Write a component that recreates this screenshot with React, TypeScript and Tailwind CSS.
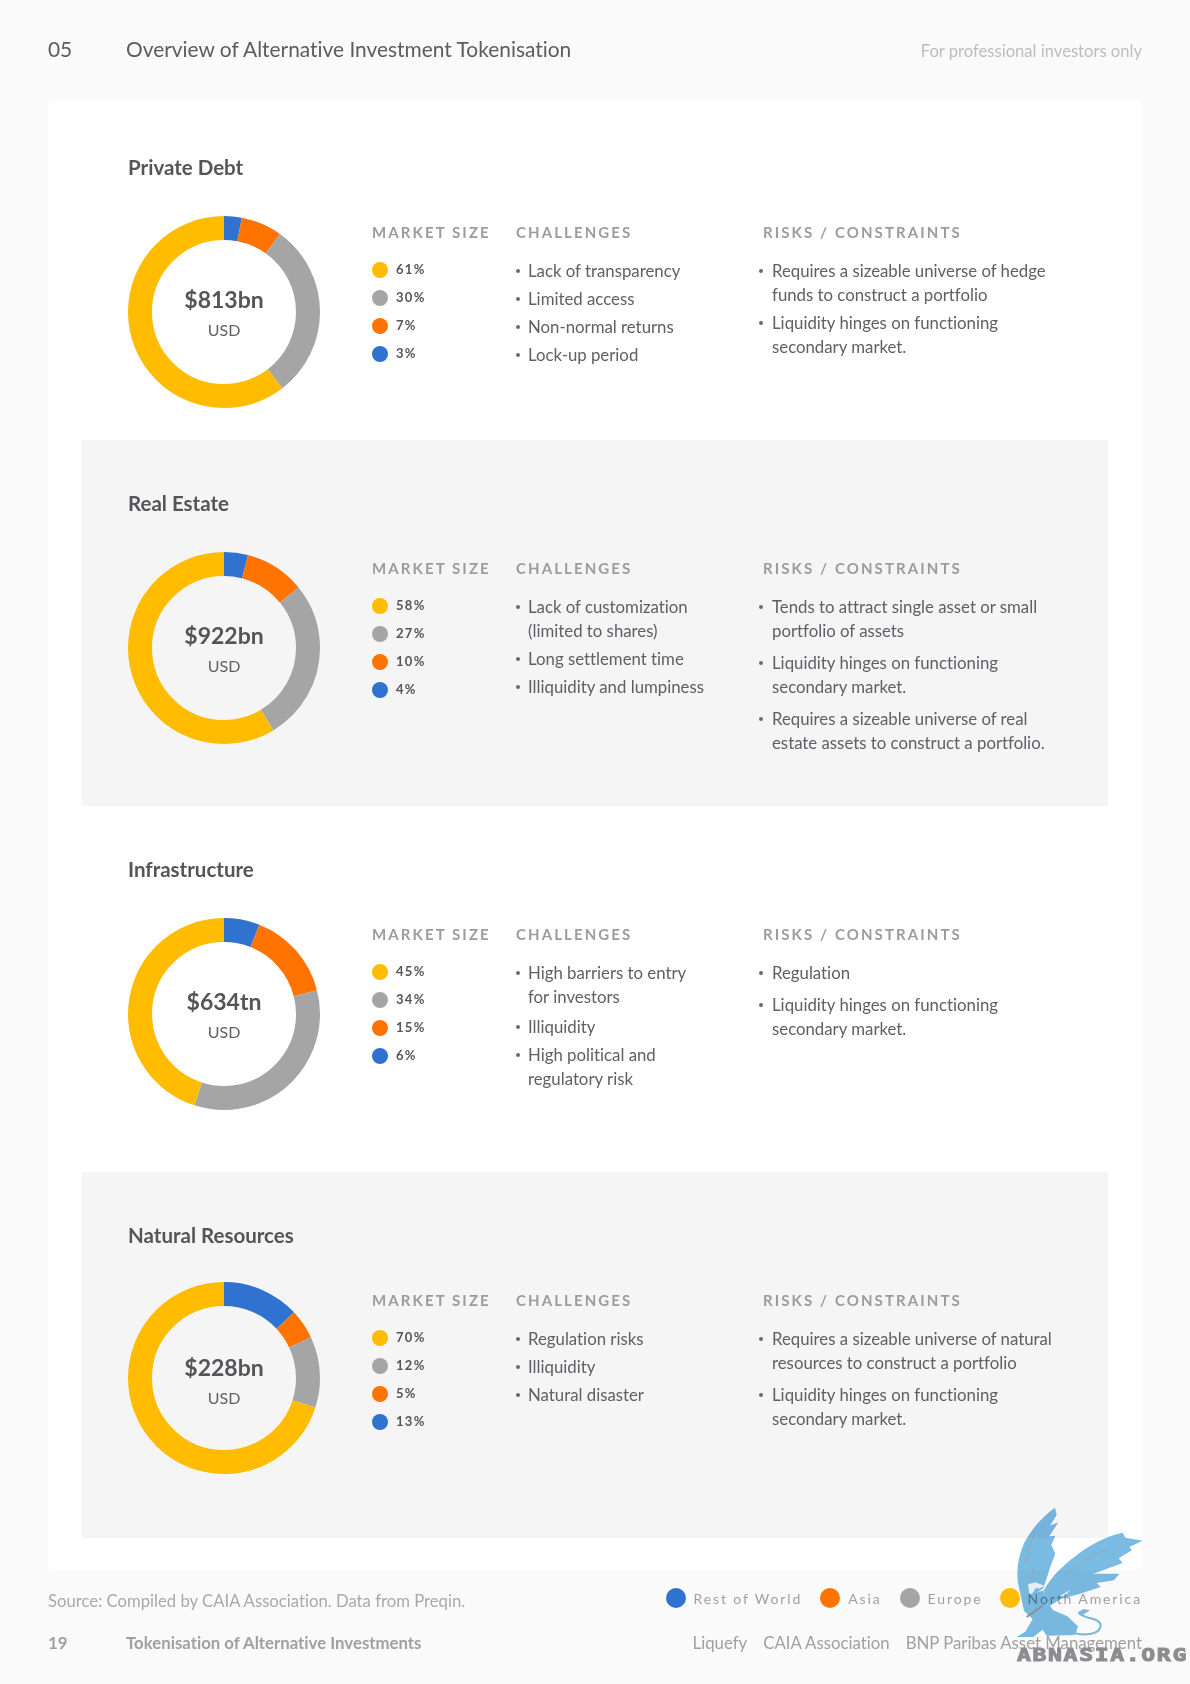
const FONT = "font-['Lato','Noto_Sans',sans-serif]";

const COLORS = ["#2f72cf", "#ff7300", "#a5a5a5", "#ffbc00"];

type Section = {
  title: string;
  amount: string;
  // blue, orange, grey, yellow
  values: number[];
  challenges: string[][];
  risks: string[][];
  shaded?: boolean;
  className: string;
  riskGap: string;
  challengeClass?: string;
  donutClass?: string;
  amountClass?: string;
};

const sections: Section[] = [
  {
    title: "Private Debt",
    amount: "$813bn",
    values: [3, 7, 30, 61],
    challenges: [["Lack of transparency"], ["Limited access"], ["Non-normal returns"], ["Lock-up period"]],
    risks: [
      ["Requires a sizeable universe of hedge", "funds to construct a portfolio"],
      ["Liquidity hinges on functioning", "secondary market."],
    ],
    className: "h-[340px] pt-[52px]",
    riskGap: "gap-1",
  },
  {
    title: "Real Estate",
    amount: "$922bn",
    values: [4, 10, 27, 58],
    challenges: [["Lack of customization", "(limited to shares)"], ["Long settlement time"], ["Illiquidity and lumpiness"]],
    risks: [
      ["Tends to attract single asset or small", "portfolio of assets"],
      ["Liquidity hinges on functioning", "secondary market."],
      ["Requires a sizeable universe of real", "estate assets to construct a portfolio."],
    ],
    shaded: true,
    className: "h-[366px] pt-[48px]",
    riskGap: "gap-2",
  },
  {
    title: "Infrastructure",
    amount: "$634tn",
    values: [6, 15, 34, 45],
    challenges: [["High barriers to entry", "for investors"], ["Illiquidity"], ["High political and", "regulatory risk"]],
    risks: [["Regulation"], ["Liquidity hinges on functioning", "secondary market."]],
    className: "h-[366px] pt-[48px]",
    riskGap: "gap-2",
    challengeClass: "[&>li:first-child]:mb-[2px]",
  },
  {
    title: "Natural Resources",
    amount: "$228bn",
    values: [13, 5, 12, 70],
    challenges: [["Regulation risks"], ["Illiquidity"], ["Natural disaster"]],
    risks: [
      ["Requires a sizeable universe of natural", "resources to construct a portfolio"],
      ["Liquidity hinges on functioning", "secondary market."],
    ],
    shaded: true,
    className: "h-[366px] pt-[48px]",
    riskGap: "gap-2",
    donutClass: "-mt-[2px]",
    amountClass: "pt-[3px]",
  },
];

function Donut({
  values,
  amount,
  className,
  amountClass,
}: {
  values: number[];
  amount: string;
  className?: string;
  amountClass?: string;
}) {
  const total = values.reduce((a, b) => a + b, 0);
  let offset = 0;
  return (
    <div className={`relative h-[192px] w-[192px] shrink-0 ${className ?? ""}`}>
      <svg viewBox="0 0 192 192" className="h-full w-full -rotate-90">
        {values.map((v, i) => {
          const dashOffset = -offset;
          offset += v;
          return (
            <circle
              key={i}
              cx="96"
              cy="96"
              r="84"
              fill="none"
              stroke={COLORS[i]}
              strokeWidth="24"
              pathLength={total}
              strokeDasharray={`${v} ${total - v}`}
              strokeDashoffset={dashOffset}
            />
          );
        })}
      </svg>
      <div className={`absolute inset-0 flex flex-col items-center justify-center ${amountClass ?? ""}`}>
        <span className="mt-[-1px] text-[23px] leading-[32px] font-bold text-[#555558]">{amount}</span>
        <span className="mt-[5px] text-[16px] leading-[20px] text-[#606064]">USD</span>
      </div>
    </div>
  );
}

function Heading({ children }: { children: React.ReactNode }) {
  return <h4 className="text-[15px] leading-[20px] font-bold tracking-[0.14em] text-[#9c9c9f]">{children}</h4>;
}

function Bullets({ items, className }: { items: string[][]; className: string }) {
  return (
    <ul className={`mt-[17px] flex flex-col ${className}`}>
      {items.map((lines, i) => (
        <li key={i} className="relative pl-[12px] text-[16.8px] leading-[24px] whitespace-nowrap text-[#606064]">
          <span className="absolute left-0 top-[10px] h-[4px] w-[4px] rounded-full bg-[#6a6a6e]" />
          {lines.map((line) => (
            <div key={line}>{line}</div>
          ))}
        </li>
      ))}
    </ul>
  );
}

function Row({ section }: { section: Section }) {
  // legend runs yellow, grey, orange, blue
  const legend = [3, 2, 1, 0];
  return (
    <section className={`${section.className} px-[46px] ${section.shaded ? "bg-[#f5f5f6]" : ""}`}>
      <h3 className="text-[20.5px] leading-[30px] font-bold text-[#555558]">{section.title}</h3>
      <div className="mt-[34px] flex">
        <Donut
          values={section.values}
          amount={section.amount}
          className={section.donutClass}
          amountClass={section.amountClass}
        />
        <div className="ml-[52px] w-[144px] pt-[6px]">
          <Heading>MARKET SIZE</Heading>
          <div className="mt-[20px] flex flex-col gap-[12px]">
            {legend.map((idx) => (
              <div key={idx} className="flex h-[16px] items-center gap-[8px]">
                <span className="h-[16px] w-[16px] rounded-full" style={{ backgroundColor: COLORS[idx] }} />
                <span className="text-[13px] font-bold tracking-[0.1em] text-[#555558]">{section.values[idx]}%</span>
              </div>
            ))}
          </div>
        </div>
        <div className="w-[247px] pt-[6px]">
          <Heading>CHALLENGES</Heading>
          <Bullets items={section.challenges} className={`gap-1 ${section.challengeClass ?? ""}`} />
        </div>
        <div className="w-[290px] pt-[6px]">
          <Heading>RISKS / CONSTRAINTS</Heading>
          <div className="ml-[-4px] [&_li]:pl-[13px]">
            <Bullets items={section.risks} className={section.riskGap} />
          </div>
        </div>
      </div>
    </section>
  );
}

function Griffin() {
  return (
    <svg viewBox="0 0 570 540" className="h-[180px] w-[190px]">
      <g fill="#7abbe3">
        {/* left wing */}
        <path d="M165 38 C130 62 95 100 72 145 C55 185 48 225 54 265 L72 348 L100 300 L130 280 L140 250 L152 212 L166 176 L154 150 L166 122 L148 124 L175 82 L150 92 L170 60 Z" />
        {/* right wing */}
        <path d="M428 137 L376 128 L368 113 C320 122 262 152 210 196 C180 222 155 245 132 285 L138 340 L182 312 L240 296 L302 276 L290 264 L342 256 L358 236 L280 236 L368 204 L356 190 L396 166 L388 156 Z" />
        {/* body */}
        <path d="M72 348 L90 300 L130 286 L142 322 L160 346 L202 364 L234 394 L226 420 L140 422 L128 404 L100 426 L50 426 L76 410 L98 372 Z" />
        {/* head */}
        <path d="M84 268 L106 262 L133 272 L118 283 L110 300 L88 312 Z" />
        {/* tuft */}
        <path d="M233 352 L252 342 L270 346 L254 356 L240 362 Z" />
      </g>
      <path d="M210 410 C250 425 300 420 302 392 C302 368 260 374 240 356" fill="none" stroke="#7abbe3" strokeWidth="6" />
      <path d="M84 268 L106 262 L133 272 L118 281 L108 278 L96 296 L88 296 Z" fill="#eaf3f9" />
      <path d="M178 304 L212 284 L194 302 Z" fill="#f5fafc" />
      <g fill="none" stroke="#9ea6ae" strokeWidth="3" strokeLinecap="round">
        <path d="M105 115 C92 140 82 175 76 205" />
        <path d="M320 165 C280 180 230 205 196 240" />
        <path d="M98 222 L97 236" />
      </g>
      <path d="M130 330 L80 366" fill="none" stroke="#93939a" strokeWidth="6" />
    </svg>
  );
}

export default function App() {
  return (
    <div className={`relative h-[1684px] w-[1190px] overflow-hidden bg-[#fafafa] [font-variant-ligatures:none] ${FONT}`}>
      <header className="flex h-[100px] items-start justify-between px-[48px] pt-[35px]">
        <div className="flex text-[20.9px] leading-[28px] text-[#5c5c60]">
          <span className="w-[78px]">05</span>
          <span>Overview of Alternative Investment Tokenisation</span>
        </div>
        <span className="mt-[4px] text-[16.6px] leading-[24px] text-[#bdbdc0]">For professional investors only</span>
      </header>

      <main className="mx-[48px] h-[1470px] rounded-[6px] bg-white px-[34px]">
        {sections.map((s) => (
          <Row key={s.title} section={s} />
        ))}
      </main>

      <footer className="px-[48px]">
        <div className="mt-[18px] flex h-[24px] items-center justify-between">
          <span className="mt-[4px] text-[16.7px] text-[#a9a9ac]">
            Source: Compiled by CAIA Association. Data from Preqin.
          </span>
          <div className="mb-[4px] flex items-center text-[14px] tracking-[0.135em] text-[#a0a0a3]">
            {[
              ["Rest of World", "bg-[#2f72cf]", "mr-[18px]"],
              ["Asia", "bg-[#ff7300]", "mr-[18px]"],
              ["Europe", "bg-[#a5a5a5]", "mr-[17px]"],
              ["North America", "bg-[#ffbc00]", ""],
            ].map(([label, bg, mr]) => (
              <div key={label} className={`flex items-center gap-[8px] ${mr}`}>
                <span className={`h-[20px] w-[20px] rounded-full ${bg}`} />
                <span>{label}</span>
              </div>
            ))}
          </div>
        </div>
        <div className="mt-[19px] flex items-center justify-between text-[16.8px] leading-[24px]">
          <div className="flex font-bold text-[#a0a0a3]">
            <span className="w-[78px]">19</span>
            <span>Tokenisation of Alternative Investments</span>
          </div>
          <div className="flex gap-[16px] text-[#a0a0a3]">
            <span>Liquefy</span>
            <span>CAIA Association</span>
            <span>BNP Paribas Asset Management</span>
          </div>
        </div>
      </footer>

      {/* watermark over the footer */}
      <div className="absolute left-[1000px] top-[1495px] mix-blend-multiply">
        <Griffin />
      </div>
      <span className="absolute left-[1017px] top-[1643px] origin-left scale-x-[1.25] font-['DejaVu_Sans_Mono',monospace] text-[18.5px] leading-[24px] font-bold tracking-[0.07em] text-[#8d8d90] [-webkit-text-stroke:1px_#8d8d90]">
        ABNASIA.ORG
      </span>
    </div>
  );
}
